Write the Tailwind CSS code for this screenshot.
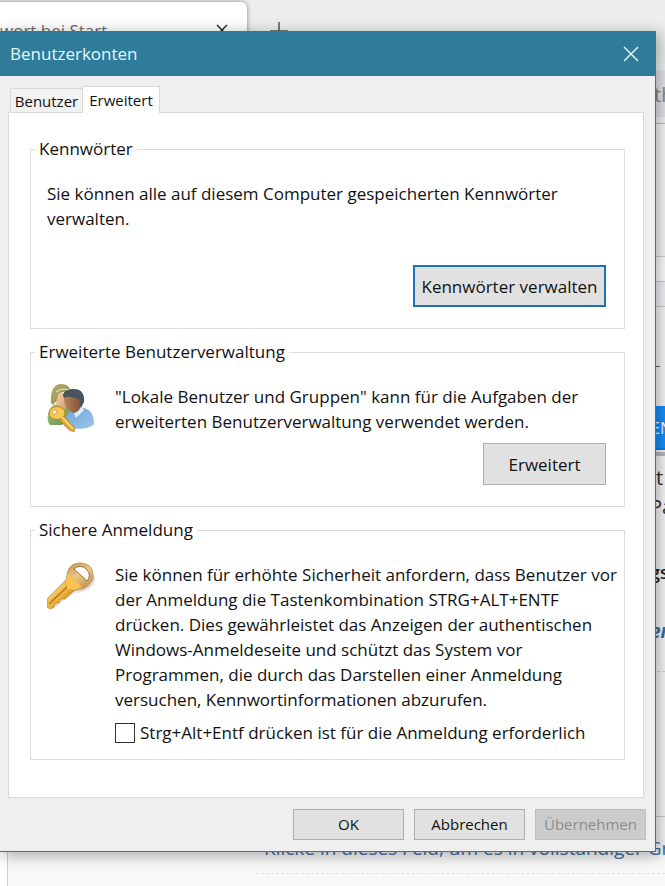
<!DOCTYPE html>
<html lang="de">
<head>
<meta charset="utf-8">
<meta name="viewport" content="width=device-width, initial-scale=1">
<title>Benutzerkonten</title>
<script src="https://cdn.jsdelivr.net/npm/@tailwindcss/browser@4"></script>
</head>
<body class="relative min-h-screen overflow-hidden bg-[#f9f9f9] font-['Open_Sans','Noto_Sans',sans-serif] text-[17px] leading-[25px] text-[#111]">

<!-- Browser window behind the dialog -->
<div class="absolute inset-0 overflow-hidden text-[#4a4a50]" aria-hidden="true">
  <div class="absolute inset-x-0 top-0 h-[124px] border-b border-[#bdbdc0] bg-[#eeeeee]"></div>
  <div class="absolute inset-x-0 top-[63px] h-[60px] bg-[#f4f4f6]"></div>
  <div class="absolute right-0 top-[70px] h-[47px] w-40 bg-[#e6e6ea]"></div>
  <div class="absolute -left-2 top-[2px] h-[60px] w-[255px] rounded-md bg-white shadow-[0_0_5px_rgba(0,0,0,0.45)]"></div>
  <span class="absolute left-0 top-[18px] whitespace-nowrap text-[17px] text-[#6b6b70]">wort bei Start</span>
  <svg class="absolute left-[216px] top-[24px] size-3" viewBox="0 0 12 12" fill="none" stroke="#222" stroke-width="1.4"><path d="M1 1l10 10M11 1L1 11"/></svg>
  <svg class="absolute left-[270px] top-[22px] size-[18px]" viewBox="0 0 18 18" fill="none" stroke="#555" stroke-width="1.5"><path d="M9 0v18M0 9h18"/></svg>
  <span class="absolute left-[654px] top-[82px] text-[20px] text-[#85858a]">th</span>
  <div class="absolute right-0 top-[256px] h-[26px] w-40 border-y border-[#d0d0d0] bg-white"></div>
  <div class="absolute right-0 top-[282px] h-[25px] w-40 border-b border-[#d0d0d0] bg-[#f2f4f7]"></div>
  <div class="absolute right-[5px] top-[366px] h-px w-10 bg-[#666]"></div>
  <div class="absolute right-0 top-[406px] h-[44px] w-40 border-b-2 border-[#0a80f0] bg-[#1490ff]"></div>
  <span class="absolute left-[651px] top-[416px] text-[16px] text-white">EN</span>
  <div class="absolute right-0 top-[452px] h-1 w-40 bg-[#bcbcbf]"></div>
  <span class="absolute left-[656px] top-[465px] text-[20px] text-[#333]">t</span>
  <span class="absolute left-[650px] top-[494px] text-[20px] text-[#333]">Pa</span>
  <span class="absolute left-[650px] top-[560px] text-[18px] font-semibold text-[#222]">gs</span>
  <span class="absolute left-[650px] top-[619px] text-[19px] font-bold italic text-[#3b6ea5]">en</span>
  <div class="absolute right-0 top-[671px] w-40 border-b border-dashed border-[#d6d6da]"></div>
  <div class="absolute right-0 top-[816px] w-40 border-b border-[#cfcfd2]"></div>
  <div class="absolute bottom-0 left-0 h-[60px] w-2 border-r border-[#d0d0d0] bg-white"></div>
  <span class="absolute left-[264px] top-[836px] whitespace-nowrap text-[19px] text-[#3b6ea5]">Klicke in dieses Feld, um es in vollständiger Größe</span>
  <div class="absolute left-[256px] right-0 top-[873px] border-b border-dashed border-[#e0e0e0]"></div>
</div>

<!-- Dialog -->
<main class="relative mr-[9px] mt-[31px] flex flex-col border-b border-r border-[#2e7c9a] bg-[#efefef] shadow-[3px_3px_14px_1px_rgba(0,0,0,0.3)]">
  <header class="flex h-[45px] items-center justify-between bg-[#2e7c9a] pl-[10px] pr-4 text-[#e4f8fc]">
    <h1>Benutzerkonten</h1>
    <button type="button" aria-label="Schließen" class="block">
      <svg class="size-4" viewBox="0 0 16 16" fill="none" stroke="#e8fafd" stroke-width="1.4"><path d="M1 1l14 14M15 1L1 15"/></svg>
    </button>
  </header>

  <div class="flex items-end pl-[10px] pt-[10px] text-[15px]" role="tablist">
    <button type="button" role="tab" aria-selected="false" class="h-6 w-[72px] whitespace-nowrap border border-b-0 border-r-0 border-[#d9d9d9] bg-[#f1f1f1] text-center leading-6">Benutzer</button>
    <button type="button" role="tab" aria-selected="true" class="relative z-10 -mb-px h-[27px] w-[78px] whitespace-nowrap border border-b-0 border-[#d9d9d9] bg-white text-center leading-6">Erweitert</button>
  </div>

  <section role="tabpanel" aria-label="Erweitert" class="ml-2 mr-[11px] flex flex-col gap-[11px] border border-[#dadada] bg-white pb-[37px] pl-[21px] pr-[18px] pt-6">
    <fieldset class="border border-[#dcdcdc] pb-[21px] pl-4 pr-[18px]">
      <legend class="-ml-3 px-1 leading-6">Kennwörter</legend>
      <p class="pt-5">Sie können alle auf diesem Computer gespeicherten Kennwörter<br>verwalten.</p>
      <div class="mt-[34px] flex justify-end">
        <button type="button" class="h-[42px] w-[193px] whitespace-nowrap border-2 border-[#1a72b8] bg-[#e1e1e1]">Kennwörter verwalten</button>
      </div>
    </fieldset>

    <fieldset class="border border-[#dcdcdc] pb-[21px] pl-4 pr-[18px]">
      <legend class="-ml-3 px-1 leading-6">Erweiterte Benutzerverwaltung</legend>
      <div class="flex gap-5 pt-5">
        <svg class="size-12 shrink-0" viewBox="0 0 48 48" aria-hidden="true">
          <defs>
            <linearGradient id="hat" x1="0" y1="0" x2="1" y2="1"><stop offset="0" stop-color="#b5b06c"/><stop offset="1" stop-color="#8d8650"/></linearGradient>
            <linearGradient id="green" x1="0" y1="0" x2="1" y2="1"><stop offset="0" stop-color="#a9c986"/><stop offset="1" stop-color="#5a8f45"/></linearGradient>
            <linearGradient id="blue" x1="0" y1="0" x2="1" y2="1"><stop offset="0" stop-color="#6fa3d6"/><stop offset="1" stop-color="#9cc6ea"/></linearGradient>
            <linearGradient id="skin" x1="0" y1="0" x2="1" y2="1"><stop offset="0" stop-color="#f3cfa8"/><stop offset="1" stop-color="#cf9c6c"/></linearGradient>
            <linearGradient id="brown" x1="0" y1="0" x2="1" y2="0"><stop offset="0" stop-color="#b8855b"/><stop offset="1" stop-color="#7d4f31"/></linearGradient>
          </defs>
          <path d="M1 31c1-7 4-9 8-11l12 1 4 12-10 8H3c-2-2-3-6-2-10z" fill="url(#green)"/>
          <path d="M8 9h14v9c-1 5-3 7-7 7-5-1-7-7-7-16z" fill="url(#skin)"/>
          <path d="M4 19C3 7 7 0 14 0c6 0 9 3 10 8-5-1-9 0-13 2 0 5-2 8-5 11z" fill="url(#hat)"/>
          <path d="M9 8c4-3 10-4 15-1" fill="none" stroke="#ded9a6" stroke-width="1.500"/>
          <path d="M17 39c1-8 6-12 11-14l9-1c7 2 10 7 10 16-5 6-23 6-30 2z" fill="url(#blue)"/>
          <path d="M26 27l3 7 8-8-2-3z" fill="#dcecf8"/>
          <path d="M17 12c3-4 15-4 18 0 1 8-2 16-8 17-6-1-11-9-10-17z" fill="url(#brown)"/>
          <path d="M16 12c0-5 5-7 11-7 8 0 11 6 10 13l-3 6-2-9c-5-1-8-3-12-2-2 1-3 1-4-1z" fill="#4b545c"/>
          <path d="M10 33l4-4 14 15-1 4-5-2z" fill="#e5a72e" stroke="#b97a17" stroke-width=".6"/>
          <ellipse cx="10" cy="29" rx="8" ry="6.500" fill="#f5c756" stroke="#bd8222" stroke-width="1"/>
          <ellipse cx="7.500" cy="28" rx="2.500" ry="2.200" fill="#fdf3cf" stroke="#c38b2a" stroke-width=".7"/>
          <path d="M15 33l11 12" stroke="#fce08c" stroke-width="1.300"/>
        </svg>
        <p>"Lokale Benutzer und Gruppen" kann für die Aufgaben der<br>erweiterten Benutzerverwaltung verwendet werden.</p>
      </div>
      <div class="mt-[9px] flex justify-end">
        <button type="button" class="h-[42px] w-[123px] border border-[#adadad] bg-[#e1e1e1]">Erweitert</button>
      </div>
    </fieldset>

    <fieldset class="border border-[#dcdcdc] pb-[14px] pl-4">
      <legend class="-ml-3 px-1 leading-6">Sichere Anmeldung</legend>
      <div class="flex gap-5 pt-5">
        <svg class="size-12 shrink-0" viewBox="0 0 48 48" aria-hidden="true">
          <defs>
            <linearGradient id="gold" x1=".2" y1=".2" x2=".8" y2=".8"><stop offset="0" stop-color="#fbd976"/><stop offset=".5" stop-color="#f0b53c"/><stop offset="1" stop-color="#c07d2a"/></linearGradient>
            <linearGradient id="bow" x1=".2" y1="0" x2=".8" y2="1"><stop offset="0" stop-color="#c39a62"/><stop offset=".45" stop-color="#edc784"/><stop offset="1" stop-color="#bf8a44"/></linearGradient>
            <filter id="soft" x="-20%" y="-20%" width="140%" height="140%"><feGaussianBlur stdDeviation="1"/></filter>
          </defs>
          <path d="M4 46l22-18c10 2 20-4 21-14" fill="none" stroke="#000" stroke-opacity=".22" stroke-width="3" filter="url(#soft)"/>
          <path d="M19 18L0 37v8l3 2 4-2 1-4 4 0 1-4 5 0 11-10z" fill="url(#gold)" stroke="#bd8028" stroke-width=".7"/>
          <path d="M21 24L2 42" stroke="#b27426" stroke-width="1.500"/>
          <path d="M33 1C41 1 46 6 46 13S40 26 33 27c-4 1-9 2-12-1s-2-8-1-13C21 5 26 1 33 1z" fill="url(#bow)" stroke="#b58343" stroke-width=".8"/>
          <path d="M21 11l14 14c-5 3-11 4-14 2-3-3-2-11 0-16z" fill="#f8c250"/>
          <path d="M27 7c4-4 10-3 13 1 3 3 3 8 0 11z" fill="#fff" stroke="#94703f" stroke-width="1"/>
        </svg>
        <div>
          <p>Sie können für erhöhte Sicherheit anfordern, dass Benutzer vor<br>der Anmeldung die Tastenkombination STRG+ALT+ENTF<br>drücken. Dies gewährleistet das Anzeigen der authentischen<br>Windows-Anmeldeseite und schützt das System vor<br>Programmen, die durch das Darstellen einer Anmeldung<br>versuchen, Kennwortinformationen abzurufen.</p>
          <div class="mt-2 flex items-center gap-[5px]">
            <input id="cad" type="checkbox" class="size-5 shrink-0 appearance-none border border-[#333] bg-white checked:bg-[#1a72b8]">
            <label for="cad" class="whitespace-nowrap">Strg+Alt+Entf drücken ist für die Anmeldung erforderlich</label>
          </div>
        </div>
      </div>
    </fieldset>
  </section>

  <footer class="flex justify-end gap-[10px] pb-[11px] pr-[9px] pt-[11px] text-[15px]">
    <button type="button" class="h-[31px] w-[111px] border border-[#adadad] bg-[#e1e1e1]">OK</button>
    <button type="button" class="h-[31px] w-[111px] border border-[#adadad] bg-[#e1e1e1]">Abbrechen</button>
    <button type="button" disabled class="h-[31px] w-[111px] border border-[#bfbfbf] bg-[#cccccc] text-[#8c8c8c]">Übernehmen</button>
  </footer>
</main>
</body>
</html>
